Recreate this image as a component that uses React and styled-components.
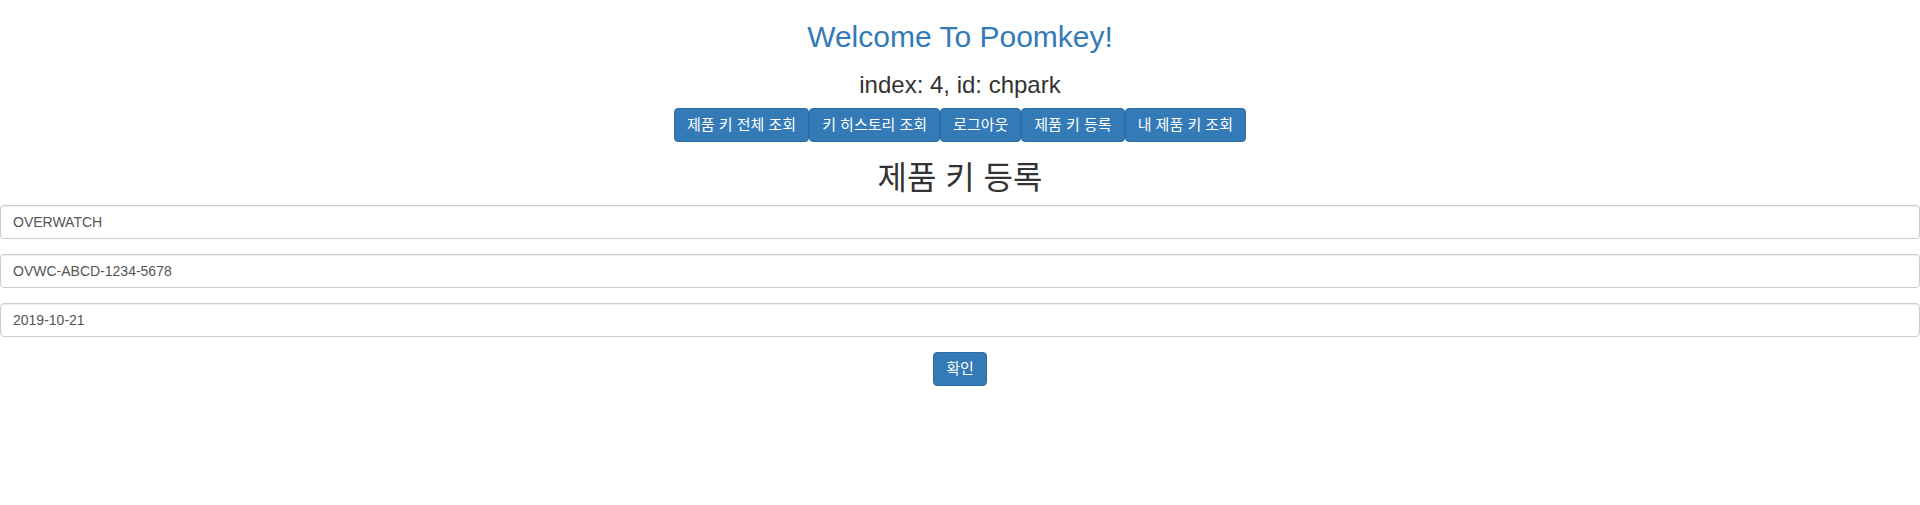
import React from "react";
import styled, { createGlobalStyle } from "styled-components";

const GlobalStyle = createGlobalStyle`
  html, body {
    margin: 0;
    padding: 0;
    background: #fff;
  }
  body {
    font-family: "Liberation Sans", Arial, "Noto Sans CJK KR", sans-serif;
    font-size: 14px;
    line-height: 1.42857143;
    color: #333;
  }
  * {
    box-sizing: border-box;
  }
`;

const Page = styled.div`
  text-align: center;
`;

const Title = styled.h2`
  margin: 20px 0 10px;
  font-size: 30px;
  font-weight: 500;
  line-height: 33px;
  color: #337ab7;
`;

const UserInfo = styled.h3`
  margin: 19px 0 10px;
  font-size: 24px;
  font-weight: 500;
  line-height: 1.1;
`;

const Nav = styled.div`
  display: flex;
  justify-content: center;
`;

// korean labels: bumped a little so the hangul is as wide as in the original
const Button = styled.button`
  display: inline-block;
  height: 34px;
  padding: 6px 12px;
  font-family: inherit;
  font-size: 15px;
  line-height: 20px;
  color: #fff;
  background-color: #337ab7;
  border: 1px solid #2e6da4;
  border-radius: 4px;
  cursor: pointer;
  white-space: nowrap;
`;

const SectionTitle = styled.h2`
  margin: 20px 0 10px;
  font-size: 32px;
  font-weight: 400;
  line-height: 33px;
`;

const Form = styled.form`
  display: flex;
  flex-direction: column;
  align-items: center;
`;

const Field = styled.input`
  display: block;
  width: 100%;
  height: 34px;
  margin: 0 0 15px;
  padding: 6px 12px;
  font-family: inherit;
  font-size: 14px;
  line-height: 1.42857143;
  color: #555;
  background-color: #fff;
  border: 1px solid #ccc;
  border-radius: 4px;
  box-shadow: inset 0 1px 1px rgba(0, 0, 0, 0.075);
`;

const menu = ["제품 키 전체 조회", "키 히스토리 조회", "로그아웃", "제품 키 등록", "내 제품 키 조회"];

export default function App() {
  return (
    <Page>
      <GlobalStyle />
      <Title>Welcome To Poomkey!</Title>
      <UserInfo>index: 4, id: chpark</UserInfo>
      <Nav>
        {menu.map((m) => (
          <Button key={m} type="button">{m}</Button>
        ))}
      </Nav>
      <SectionTitle>제품 키 등록</SectionTitle>
      <Form onSubmit={(e) => e.preventDefault()}>
        <Field defaultValue="OVERWATCH" />
        <Field defaultValue="OVWC-ABCD-1234-5678" />
        <Field defaultValue="2019-10-21" />
        <Button type="submit">확인</Button>
      </Form>
    </Page>
  );
}
